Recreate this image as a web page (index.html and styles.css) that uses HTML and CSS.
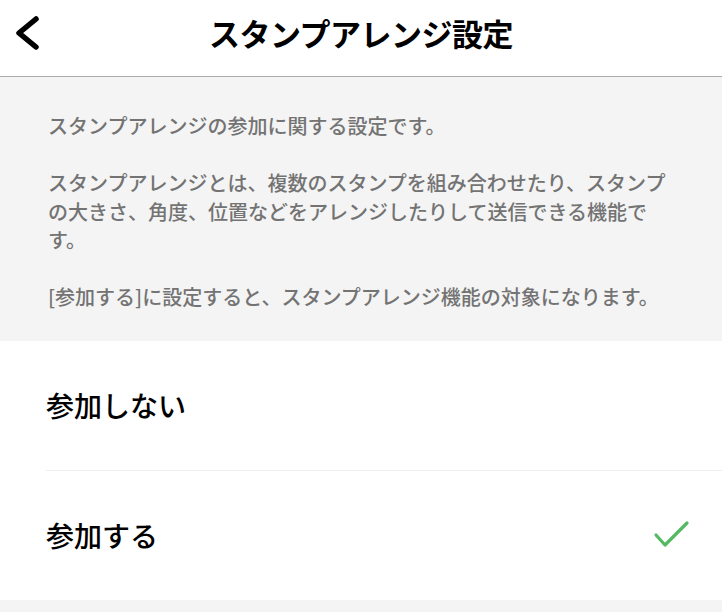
FILE: index.html
```html
<!DOCTYPE html>
<html lang="ja">
<head>
  <meta charset="UTF-8" />
  <meta name="viewport" content="width=device-width, initial-scale=1" />
  <title>スタンプアレンジ設定</title>
  <link rel="stylesheet" href="styles.css">
</head>
<body>

  <header class="cabecera">
    <a class="volver" href="#">
      <svg width="28" height="40" viewBox="0 0 28 40">
        <polyline points="22,5 5,19 22,33" fill="none" stroke="#000" stroke-width="5.5" stroke-linecap="round" stroke-linejoin="round"/>
      </svg>
    </a>
    <h1>スタンプアレンジ設定</h1>
  </header>

  <!-- DESCRIPCION -->
  <section class="descripcion">
    <p>スタンプアレンジの参加に関する設定です。</p>
    <p>スタンプアレンジとは、複数のスタンプを組み合わせたり、スタンプの大きさ、角度、位置などをアレンジしたりして送信できる機能です。</p>
    <p>[参加する]に設定すると、スタンプアレンジ機能の対象になります。</p>
  </section>

  <!-- OPCIONES -->
  <ul class="opciones">
    <li class="opcion">参加しない</li>
    <li class="opcion">
      参加する
      <svg class="check" width="40" height="32" viewBox="0 0 40 32">
        <polyline points="4,15 13,25 35,3" fill="none" stroke="#55b862" stroke-width="3.2" stroke-linecap="round" stroke-linejoin="round"/>
      </svg>
    </li>
  </ul>

</body>
</html>
```

FILE: styles.css
```css
body {
  font-family: "Noto Sans CJK JP", "Noto Sans", sans-serif;
  margin: 0;
  background-color: #f4f4f4;
  color: #000;
}

.cabecera {
  background-color: #fff;
  height: 76px;
  border-bottom: 1px solid #aaa;
  display: flex;
  align-items: center;
  justify-content: center;
  position: relative;
}

.cabecera h1 {
  margin: 0;
  font-size: 31px;
  font-weight: 700;
  letter-spacing: -0.5px;
  margin-top: -11px;
}

.volver {
  position: absolute;
  left: 14px;
  top: 14px;
  display: flex;
}

.descripcion {
  padding: 35px 48px 29px;
  color: #737373;
  font-size: 20px;
  font-weight: 500;
  line-height: 28.5px;
}

.descripcion p {
  margin: 0 0 28.5px;
}

.descripcion p:last-child {
  margin-bottom: 0;
}

.opciones {
  list-style: none;
  margin: 0;
  padding: 0 0 0 46px;
  background-color: #fff;
}

.opcion {
  height: 129px;
  display: flex;
  align-items: center;
  justify-content: space-between;
  padding-right: 30px;
  font-size: 28px;
  font-weight: 500;
  border-bottom: 1px solid #eee;
}

.opcion:last-child {
  border-bottom: none;
}

.check {
  margin-top: 2px;
}
```
